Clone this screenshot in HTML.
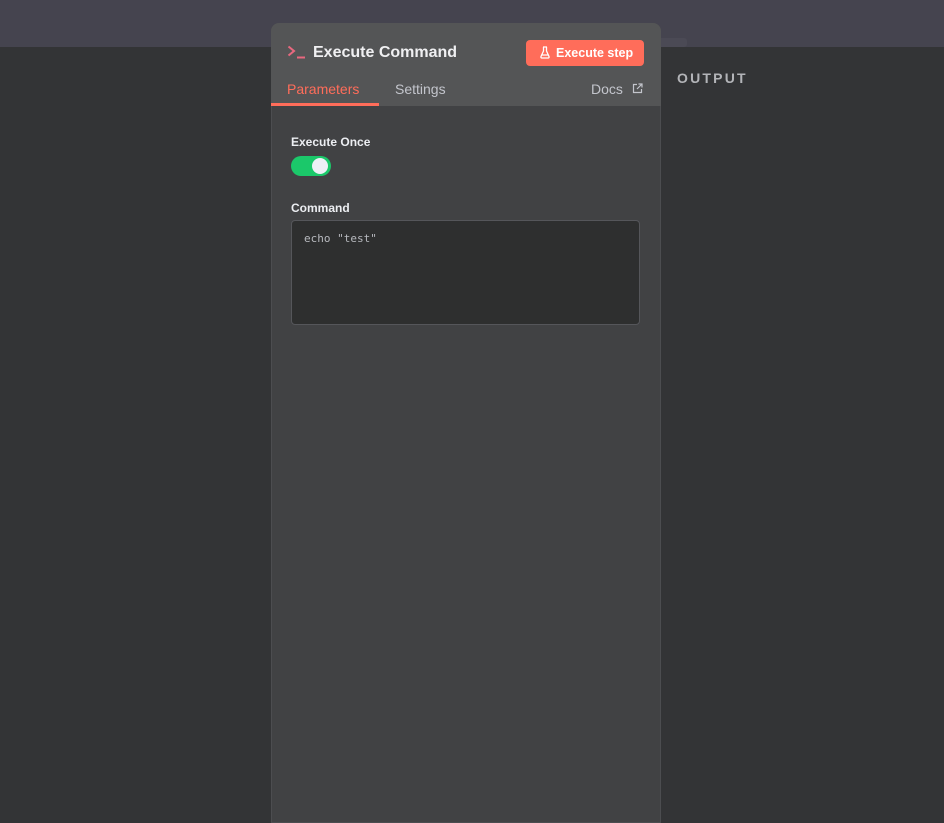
<!DOCTYPE html>
<html><head><meta charset="utf-8"><style>
*{box-sizing:border-box;margin:0;padding:0}
html,body{width:944px;height:811px;overflow:hidden;background:#333436;font-family:"Liberation Sans",sans-serif}
.top{position:absolute;left:0;top:0;width:944px;height:47px;background:#45444f}
.strip{position:absolute;left:655px;top:38px;width:32px;height:9px;background:#4b4a55;border-radius:3px}
.panel{position:absolute;left:271px;top:23px;width:390px;height:800px;background:#414244;border-radius:8px 8px 0 0;box-shadow:inset 0 0 0 1px #4c4d50;overflow:hidden}
.head{height:83px;background:#545556;position:relative}
.title{position:absolute;left:42px;top:21px;color:#f0f0f2;font-weight:bold;font-size:16px}
.btn{position:absolute;left:255px;top:17px;width:118px;height:26px;background:#ff6d5a;border-radius:4px;color:#fff;font-weight:bold;font-size:12.5px;line-height:26px;padding-left:30px}
.tab{position:absolute;top:58px;font-size:14px;color:#c3c5cc}
.tab.a{color:#ff6d5a}
.ul{position:absolute;left:0;top:80px;width:108px;height:3px;background:#ff6d5a}
.lbl{position:absolute;left:20px;font-size:12px;font-weight:bold;color:#eceef2}
.tog{position:absolute;left:20px;top:133px;width:40px;height:20px;border-radius:10px;background:#1bc86a}
.tog:after{content:"";position:absolute;right:3px;top:2px;width:16px;height:16px;border-radius:50%;background:#eef0f6}
.ta{position:absolute;left:20px;top:197px;width:349px;height:105px;background:#2e2f2f;border:1px solid #55565a;border-radius:4px;color:#b7b9be;font-family:"DejaVu Sans Mono",monospace;font-size:11px;padding:11px 12px}
.out{position:absolute;left:677px;top:70px;color:#b3b4b8;font-weight:bold;font-size:14px;letter-spacing:2.2px}
</style></head><body>
<div class="top"></div><div class="strip"></div>
<div class="out">OUTPUT</div>
<div class="panel">
 <div class="head">
  <svg style="position:absolute;left:16px;top:22px" width="20" height="14" viewBox="0 0 20 14" fill="none" stroke="#e8687f" stroke-width="2"><path d="M1.5 1.5L7 6L1.5 10.5M10 12.5h8"/></svg>
  <div class="title">Execute Command</div>
  <div class="btn">Execute step</div>
  <svg style="position:absolute;left:269px;top:23px" width="10" height="13" viewBox="0 0 10 13" fill="none" stroke="#fff" stroke-width="1.3"><path d="M3 1h4M3.5 1v4L1 10.5q-.4 1.5 1 1.5h6q1.4 0 1-1.5L6.5 5V1M2 9h6"/></svg>
  <div class="tab a" style="left:16px">Parameters</div>
  <div class="tab" style="left:124px">Settings</div>
  <div class="tab" style="left:320px">Docs</div>
  <svg style="position:absolute;left:361px;top:60px" width="11" height="11" viewBox="0 0 11 11" fill="none" stroke="#c3c5cc" stroke-width="1.2"><path d="M5 1.5H1.5v8h8V6M6.5 1h3.5v3.5M10 1L5 6"/></svg>
  <div class="ul"></div>
 </div>
 <div class="lbl" style="top:112px">Execute Once</div>
 <div class="tog"></div>
 <div class="lbl" style="top:178px">Command</div>
 <div class="ta">echo "test"</div>
</div>
</body></html>
